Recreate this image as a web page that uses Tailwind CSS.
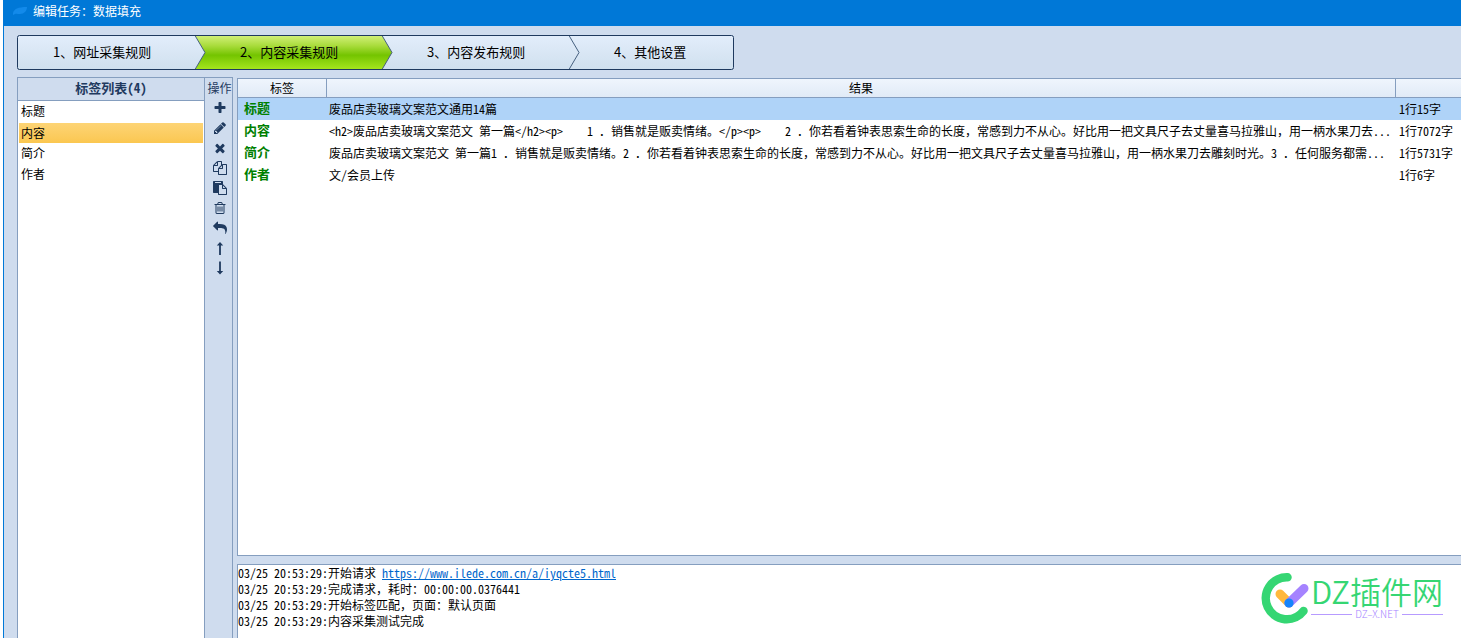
<!DOCTYPE html>
<html lang="zh-CN">
<head>
<meta charset="utf-8">
<title>编辑任务：数据填充</title>
<script src="https://cdn.jsdelivr.net/npm/@tailwindcss/browser@4"></script>
</head>
<body class="bg-white text-black text-[12px] font-['Noto_Sans_Mono_CJK_SC','Noto_Sans_CJK_SC',monospace]">
<div class="h-screen overflow-hidden pl-[3px]">
<div class="relative flex h-full flex-col border-l border-[#0078d7] bg-[#cfdcee]">

  <header class="flex h-[26px] shrink-0 items-center gap-[5px] bg-[#0078d7] pb-[5px] pl-[9px] text-white">
    <svg class="h-2.5 w-[15px]" viewBox="0 0 15 10" aria-hidden="true"><path d="M0 7C1 3 5 1 14 1C14 5 11 8 7 8C4 8 3 7 0 9Z" fill="#138aea"/></svg>
    <h1 class="font-['Noto_Sans_CJK_SC',sans-serif] leading-4">编辑任务：数据填充</h1>
  </header>

  <nav class="relative ml-[13px] mt-[9px] flex h-[35px] w-[717px] shrink-0 font-['Noto_Sans_CJK_SC',sans-serif] text-[13px]">
    <svg class="absolute inset-0 h-full w-full" viewBox="0 0 717 35" aria-hidden="true">
      <defs>
        <linearGradient id="pale" x2="0" y2="1"><stop stop-color="#e2edfb"/><stop offset="1" stop-color="#d0e0ee"/></linearGradient>
        <linearGradient id="green" x2="0" y2="1"><stop stop-color="#d2f07a"/><stop offset=".3" stop-color="#a9dc3c"/><stop offset=".58" stop-color="#74c400"/><stop offset="1" stop-color="#a6e61e"/></linearGradient>
      </defs>
      <rect x=".5" y=".5" width="716" height="34" rx="2" fill="url(#pale)"/>
      <path d="M178 .5H365L375 17.5L365 34.5H178L188 17.5Z" fill="url(#green)"/>
      <path d="M178 .5L188 17.5L178 34.5M365 .5L375 17.5L365 34.5M552 .5L562 17.5L552 34.5" fill="none" stroke="#46607f"/>
      <rect x=".5" y=".5" width="716" height="34" rx="2" fill="none" stroke="#1f3a5f"/>
    </svg>
    <button class="relative w-[187px] pb-0.5 pl-9 text-left">1、网址采集规则</button>
    <button class="relative w-[187px] pb-0.5 pl-9 text-left" aria-current="step">2、内容采集规则</button>
    <button class="relative w-[187px] pb-0.5 pl-9 text-left">3、内容发布规则</button>
    <button class="relative flex-1 pb-0.5 pl-9 text-left">4、其他设置</button>
  </nav>

  <div class="mt-[7px] flex min-h-0 flex-1 pl-[13px]">
    <section class="flex w-[188px] shrink-0 flex-col border-x border-t border-[#859ebf] bg-white">
      <h2 class="h-[23px] shrink-0 border-b border-[#859ebf] bg-[#cfdcee] text-center text-[13px] font-bold leading-5 text-[#1f3a5f]">标签列表(4)</h2>
      <ul class="px-px leading-[19px]">
        <li class="h-[21px] pl-0.5">标题</li>
        <li class="h-[21px] border-t border-white bg-linear-to-b from-[#fdd475] to-[#fbc750] bg-clip-padding pl-0.5">内容</li>
        <li class="h-[21px] pl-0.5">简介</li>
        <li class="h-[21px] pl-0.5">作者</li>
      </ul>
    </section>

    <section class="flex w-7 shrink-0 flex-col items-center border-r border-t border-[#859ebf] pl-0.5 text-[#1f3a5f]">
      <h2 class="h-5 shrink-0 whitespace-nowrap leading-5">操作</h2>
      <button aria-label="添加" class="flex h-5 w-5 items-center justify-center"><svg class="size-3.5" viewBox="0 0 1792 1792" fill="currentColor"><path d="M1600 736v192q0 40-28 68t-68 28h-416v416q0 40-28 68t-68 28h-192q-40 0-68-28t-28-68v-416h-416q-40 0-68-28t-28-68v-192q0-40 28-68t68-28h416v-416q0-40 28-68t68-28h192q40 0 68 28t28 68v416h416q40 0 68 28t28 68z"/></svg></button>
      <button aria-label="编辑" class="flex h-5 w-5 items-center justify-center"><svg class="size-3.5" viewBox="0 0 1792 1792" fill="currentColor"><path d="M491 1536l91-91-235-235-91 91v107h128v128h107zm523-928q0-22-22-22-10 0-17 7l-542 542q-7 7-7 17 0 22 22 22 10 0 17-7l542-542q7-7 7-17zm-54-192l416 416-832 832h-416v-416zm683 96q0 53-37 90l-166 166-416-416 166-165q36-38 90-38 53 0 91 38l235 234q37 39 37 91z"/></svg></button>
      <button aria-label="删除" class="flex h-5 w-5 items-center justify-center"><svg class="size-3.5" viewBox="0 0 1792 1792" fill="currentColor"><path d="M1490 1322q0 40-28 68l-136 136q-28 28-68 28t-68-28l-294-294-294 294q-28 28-68 28t-68-28l-136-136q-28-28-28-68t28-68l294-294-294-294q-28-28-28-68t28-68l136-136q28-28 68-28t68 28l294 294 294-294q28-28 68-28t68 28l136 136q28 28 28 68t-28 68l-294 294 294 294q28 28 28 68z"/></svg></button>
      <button aria-label="复制" class="flex h-5 w-5 items-center justify-center"><svg class="size-3.5" viewBox="0 0 1792 1792" fill="currentColor"><path d="M1696 384q40 0 68 28t28 68v1216q0 40-28 68t-68 28h-960q-40 0-68-28t-28-68v-288h-544q-40 0-68-28t-28-68v-672q0-40 20-88t48-76l408-408q28-28 76-48t88-20h416q40 0 68 28t28 68v328q68-40 128-40h416zm-544 213l-299 299h299v-299zm-640-384l-299 299h299v-299zm196 647l316-316v-416h-384v416q0 40-28 68t-68 28h-416v640h512v-256q0-40 20-88t48-76zm956 804v-1152h-384v416q0 40-28 68t-68 28h-416v640h896z"/></svg></button>
      <button aria-label="粘贴" class="flex h-5 w-5 items-center justify-center"><svg class="size-3.5" viewBox="0 0 1792 1792" fill="currentColor"><path d="M768 1664h896v-640h-416q-40 0-68-28t-28-68v-416h-384v1152zm256-1440v-64q0-13-9.5-22.5t-22.5-9.5h-704q-13 0-22.5 9.5t-9.5 22.5v64q0 13 9.5 22.5t22.5 9.5h704q13 0 22.5-9.5t9.5-22.5zm256 672h299l-299-299v299zm512 128v672q0 40-28 68t-68 28h-960q-40 0-68-28t-28-68v-160h-544q-40 0-68-28t-28-68v-1344q0-40 28-68t68-28h1088q40 0 68 28t28 68v328q21 13 36 28l408 408q28 28 48 76t20 88z"/></svg></button>
      <button aria-label="清空" class="flex h-5 w-5 items-center justify-center"><svg class="size-3.5" viewBox="0 0 1792 1792" fill="currentColor"><path d="M704 736v576q0 14-9 23t-23 9h-64q-14 0-23-9t-9-23v-576q0-14 9-23t23-9h64q14 0 23 9t9 23zm256 0v576q0 14-9 23t-23 9h-64q-14 0-23-9t-9-23v-576q0-14 9-23t23-9h64q14 0 23 9t9 23zm256 0v576q0 14-9 23t-23 9h-64q-14 0-23-9t-9-23v-576q0-14 9-23t23-9h64q14 0 23 9t9 23zm128 724v-948h-896v948q0 22 7 40.5t14.5 27 10.5 8.5h832q3 0 10.5-8.5t14.5-27 7-40.5zm-672-1076h448l-48-117q-7-9-17-11h-317q-10 2-17 11zm928 32v64q0 14-9 23t-23 9h-96v948q0 83-47 143.5t-113 60.5h-832q-66 0-113-58.5t-47-141.5v-952h-96q-14 0-23-9t-9-23v-64q0-14 9-23t23-9h309l70-167q15-37 54-63t79-26h320q40 0 79 26t54 63l70 167h309q14 0 23 9t9 23z"/></svg></button>
      <button aria-label="撤销" class="flex h-5 w-5 items-center justify-center"><svg class="size-3.5" viewBox="0 0 1792 1792" fill="currentColor"><path d="M1792 1120q0 166-127 451-3 7-10.500 24t-13.500 30-13 22q-12 17-28 17-15 0-23.500-10t-8.500-25q0-9 2.500-26.500t2.500-23.500q5-68 5-123 0-101-17.500-181t-48.500-138.500-80-101-105.500-69.500-133-42.500-154-21.500-175.500-6h-224v256q0 26-19 45t-45 19-45-19l-512-512q-19-19-19-45t19-45l512-512q19-19 45-19t45 19 19 45v256h224q713 0 875 403 53 134 53 333z"/></svg></button>
      <button aria-label="上移" class="flex h-5 w-5 items-center justify-center"><svg class="size-3.5" viewBox="0 0 14 14" fill="currentColor"><path d="M7 1L10.200 4.500H7.900V14H6.100V4.500H3.800Z"/></svg></button>
      <button aria-label="下移" class="flex h-5 w-5 items-center justify-center"><svg class="size-3.5" viewBox="0 0 14 14" fill="currentColor"><path d="M7 13.500L10.200 10H7.900V.5H6.100V10H3.800Z"/></svg></button>
    </section>

    <main class="ml-1 mt-px flex min-w-0 flex-1 flex-col gap-2">
      <section class="min-h-0 flex-1 overflow-hidden border-y border-l border-[#859ebf] bg-white">
        <table class="w-full table-fixed border-separate border-spacing-0 whitespace-nowrap">
          <colgroup><col class="w-[89px]"><col><col class="w-[65px]"></colgroup>
          <thead>
            <tr class="bg-linear-to-b from-[#eff5fd] to-[#e0eaf6] font-['Noto_Sans_CJK_SC',sans-serif] leading-[18px]">
              <th class="border-b border-r border-[#859ebf] p-0 font-normal">标签</th>
              <th class="border-b border-r border-[#859ebf] p-0 font-normal">结果</th>
              <th class="border-b border-[#859ebf] p-0" aria-label="统计"></th>
            </tr>
          </thead>
          <tbody class="leading-[22px]">
            <tr class="bg-[#afd3f8]"><th scope="row" class="p-0 pl-1.5 text-left align-top text-[13px] font-bold leading-5 text-[#008000]">标题</th><td class="p-0 pl-0.5">废品店卖玻璃文案范文通用14篇</td><td class="p-0 pl-[3px]">1行15字</td></tr>
            <tr><th scope="row" class="p-0 pl-1.5 text-left align-top text-[13px] font-bold leading-5 text-[#008000]">内容</th><td class="p-0 pl-0.5">&lt;h2&gt;废品店卖玻璃文案范文 第一篇&lt;/h2&gt;&lt;p&gt;　　1 ．销售就是贩卖情绪。&lt;/p&gt;&lt;p&gt;　　2 ．你若看着钟表思索生命的长度，常感到力不从心。好比用一把文具尺子去丈量喜马拉雅山，用一柄水果刀去...</td><td class="p-0 pl-[3px]">1行7072字</td></tr>
            <tr><th scope="row" class="p-0 pl-1.5 text-left align-top text-[13px] font-bold leading-5 text-[#008000]">简介</th><td class="p-0 pl-0.5">废品店卖玻璃文案范文 第一篇1 ．销售就是贩卖情绪。2 ．你若看着钟表思索生命的长度，常感到力不从心。好比用一把文具尺子去丈量喜马拉雅山，用一柄水果刀去雕刻时光。3 ．任何服务都需...</td><td class="p-0 pl-[3px]">1行5731字</td></tr>
            <tr><th scope="row" class="p-0 pl-1.5 text-left align-top text-[13px] font-bold leading-5 text-[#008000]">作者</th><td class="p-0 pl-0.5">文/会员上传</td><td class="p-0 pl-[3px]">1行6字</td></tr>
          </tbody>
        </table>
      </section>
      <section class="h-[74px] shrink-0 overflow-hidden whitespace-nowrap border-l border-t border-[#859ebf] bg-white leading-4">
        <p>03/25 20:53:29:开始请求 <a href="https://www.ilede.com.cn/a/iyqcte5.html" class="text-[#0066cc] underline">https://www.ilede.com.cn/a/iyqcte5.html</a></p>
        <p>03/25 20:53:29:完成请求，耗时：00:00:00.0376441</p>
        <p>03/25 20:53:29:开始标签匹配，页面：默认页面</p>
        <p>03/25 20:53:29:内容采集测试完成</p>
      </section>
    </main>
  </div>

  <div class="absolute bottom-3.5 right-[18px] flex items-center gap-0.5 font-['Noto_Sans_CJK_SC',sans-serif]">
    <svg class="h-[52px] w-12" viewBox="0 0 48 52" fill="none" stroke-linecap="round" aria-hidden="true">
      <path d="M26.500 5.300A21 21 0 1 0 42.500 39" stroke="#35d673" stroke-width="8.500"/>
      <path d="M19 22L28 31" stroke="#ffb83d" stroke-width="9"/>
      <path d="M28 31L43 16.500" stroke="#a583ff" stroke-width="9"/>
      <circle cx="28" cy="31" r="4.600" fill="#1684fc"/>
    </svg>
    <div class="pb-1">
      <p class="text-[31px] leading-9 font-[350] text-[#35d673]">DZ插件网</p>
      <p class="flex items-center gap-[3px] text-[10px] font-light leading-[10px] text-[#a583ff] before:h-px before:flex-1 before:bg-[#b79bff] after:h-px after:flex-1 after:bg-[#b79bff]">DZ–X.NET</p>
    </div>
  </div>
</div>
</div>
</body>
</html>
